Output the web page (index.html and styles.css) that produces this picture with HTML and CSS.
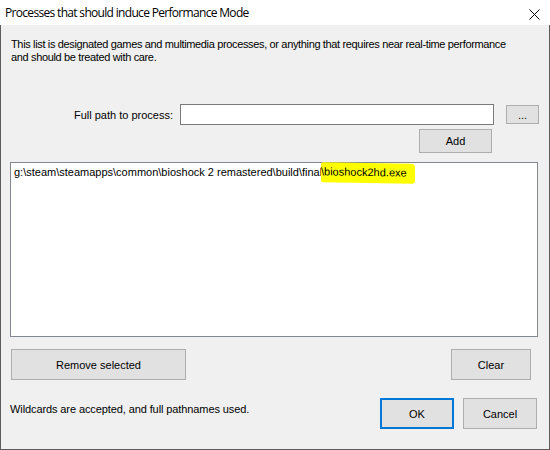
FILE: index.html
```html
<!DOCTYPE html>
<html>
<head>
<meta charset="utf-8">
<link rel="stylesheet" href="styles.css">
</head>
<body>
<div class="window">
  <div class="titlebar">
    <span class="title">Processes that should induce Performance Mode</span>
    <svg class="close" width="11" height="11" viewBox="0 0 11 11"><path d="M0.5 0.5 L10.5 10.5 M10.5 0.5 L0.5 10.5" stroke="#000" stroke-width="1" fill="none"/></svg>
  </div>
  <div class="content">
    <p class="desc">This list is designated games and multimedia processes, or anything that requires near real-time performance<br>and should be treated with care.</p>
    <div class="path-row">
      <label class="path-label">Full path to process:</label>
      <div class="path-input"></div>
      <div class="btn browse">...</div>
    </div>
    <div class="add-row">
      <div class="btn add">Add</div>
    </div>
    <div class="listbox">
      <div class="item">g:\steam\steamapps\common\bioshock 2 remastered\build\final<span class="hl">\bioshock2hd.exe</span></div>
    </div>
    <div class="action-row">
      <div class="btn remove">Remove selected</div>
      <div class="btn clear">Clear</div>
    </div>
    <div class="footer">
      <span class="note">Wildcards are accepted, and full pathnames used.</span>
      <div class="btn ok">OK</div>
      <div class="btn cancel">Cancel</div>
    </div>
  </div>
</div>
</body>
</html>
```

FILE: styles.css
```css
* { box-sizing: border-box; }
html, body { margin: 0; padding: 0; background: #f0f0f0; }
body { font-family: "Liberation Sans", Arial, sans-serif; font-size: 11px; color: #000; }

.window { width: 550px; height: 450px; display: flex; flex-direction: column; }

.titlebar {
  height: 25px; background: #fff; display: flex; align-items: center;
  padding-left: 5px; position: relative;
}
.title { font-family: "Open Sans", "Noto Sans", sans-serif; font-size: 12px; line-height: 16px; letter-spacing: -0.68px; }
.close { position: absolute; left: 529px; top: 9px; }

.content {
  flex: 1; background: #f0f0f0;
  border: 1px solid #5c5c5c; border-top: none;
  display: flex; flex-direction: column;
}

.desc { margin: 13px 0 0 10px; line-height: 13px; letter-spacing: -0.35px; }

.path-row { display: flex; align-items: center; justify-content: flex-end; margin-top: 40px; padding-right: 10px; height: 21px; }
.path-label { margin-right: 7px; }
.path-input { width: 314px; height: 21px; background: #fff; border: 1px solid #7a7a7a; }
.btn {
  background: #e1e1e1; border: 1px solid #adadad;
  display: flex; align-items: center; justify-content: center;
}
.browse { width: 33px; height: 19px; margin-left: 12px; }

.add-row { display: flex; justify-content: flex-end; padding-right: 57px; margin-top: 4px; }
.add { width: 73px; height: 24px; }

.listbox {
  margin: 9px 11px 0 9px; height: 175px; background: #fff;
  border: 1px solid #828790; padding: 3px 0 0 3px;
}
.item { line-height: 13px; white-space: nowrap; }
.hl {
  background: #ffff00; display: inline-block; padding: 3px 8px 4px 0; margin: -3px 0 -4px -1px;
  border-radius: 2px 4px 3px 2px; transform: skewY(1deg);
}

.action-row { display: flex; justify-content: space-between; margin-top: 12px; padding: 0 18px 0 10px; }
.remove { width: 175px; height: 31px; }
.clear { width: 80px; height: 31px; }

.footer { display: flex; align-items: center; margin-top: 18px; padding: 0 12px 0 9px; }
.note { flex: 1; margin-top: -10px; letter-spacing: -0.1px; }
.ok { width: 74px; height: 31px; border: 2px solid #0078d7; }
.cancel { width: 74px; height: 31px; margin-left: 9px; }
```
